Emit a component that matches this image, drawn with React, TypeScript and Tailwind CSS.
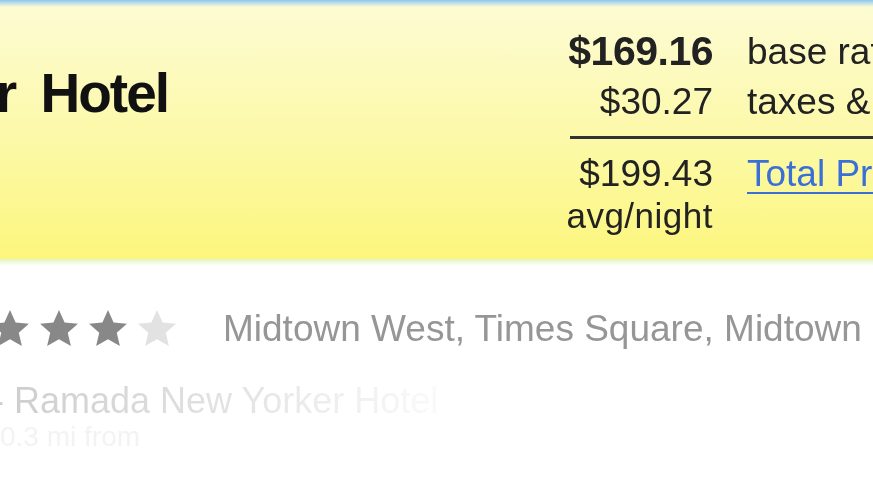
import React from "react";

function Star({ color }: { color: string }) {
  return (
    <svg viewBox="0 0 24 24" className="w-[42px] h-[42px] shrink-0">
      <path
        d="M12 1.2l3.2 7.1 7.6.7-5.8 5.1 1.8 7.6L12 17.8l-6.8 3.9 1.8-7.6-5.8-5.1 7.6-.7z"
        fill={color}
      />
    </svg>
  );
}

export default function App() {
  return (
    <div className="w-[873px] h-[492px] overflow-hidden bg-white font-['Liberation_Sans',Arial,sans-serif] blur-[0.6px]">
      {/* top blue edge */}
      <div className="h-[7px] bg-gradient-to-b from-[#8cc6f3] to-[#fdfbd2]" />

      {/* yellow summary panel */}
      <div className="h-[252px] bg-gradient-to-b from-[#fdfbd2] via-[#fcf9aa] to-[#fcf67c] flex">
        <div className="w-[168px] shrink-0 flex justify-end items-start pt-[56px]">
          <span className="shrink-0 whitespace-nowrap text-[55px] leading-[60px] font-bold tracking-[-2px] [word-spacing:8px] text-[#111]">
            The New Yorke<span className="tracking-[2px]">r</span> Hotel
          </span>
        </div>

        <div className="ml-[395px] pt-[20px] shrink-0 text-[#222]">
          <div className="flex items-center h-[50px]">
            <span className="w-[150px] text-right text-[41px] font-bold tracking-[-0.5px]">$169.16</span>
            <span className="ml-[34px] text-[37px] whitespace-nowrap">base rate</span>
          </div>
          <div className="flex items-center h-[50px]">
            <span className="w-[150px] text-right text-[37px]">$30.27</span>
            <span className="ml-[34px] text-[37px] whitespace-nowrap">taxes &amp; fees</span>
          </div>
          <div className="ml-[7px] mt-[9px] w-[400px] h-[3px] bg-[#333]" />
          <div className="flex items-center h-[50px] mt-[10px]">
            <span className="w-[150px] text-right text-[37px]">$199.43</span>
            <span className="ml-[34px] text-[37px] whitespace-nowrap text-[#3a6fd8] underline decoration-[2px] underline-offset-[6px]">
              Total Price
            </span>
          </div>
          <div className="flex items-center h-[32px]">
            <span className="w-[150px] text-right text-[35px] tracking-[0.5px] leading-none">avg/night</span>
          </div>
        </div>
      </div>
      <div className="h-[7px] bg-gradient-to-b from-[#e2f4c2] to-white" />

      {/* details */}
      <div className="pt-[35px]">
        <div className="flex items-center">
          <div className="flex items-center gap-[7px] ml-[-11px]">
            <Star color="#888888" />
            <Star color="#888888" />
            <Star color="#888888" />
            <Star color="#e2e2e2" />
          </div>
          <span className="ml-[45px] whitespace-nowrap text-[37px] text-[#969696]">
            Midtown West, Times Square, Midtown
          </span>
        </div>
        <div className="mt-[24px] ml-[-8px] whitespace-nowrap text-[36px] leading-[40px] text-transparent bg-clip-text bg-gradient-to-r from-[#cccccc] via-[#e2e2e2] to-[#fbfbfb] w-[460px]">
          - Ramada New Yorker Hotel
        </div>
        <div className="mt-[0px] whitespace-nowrap text-[28px] leading-[32px] text-[#f3f3f3]">
          0.3 mi from
        </div>
      </div>
    </div>
  );
}
